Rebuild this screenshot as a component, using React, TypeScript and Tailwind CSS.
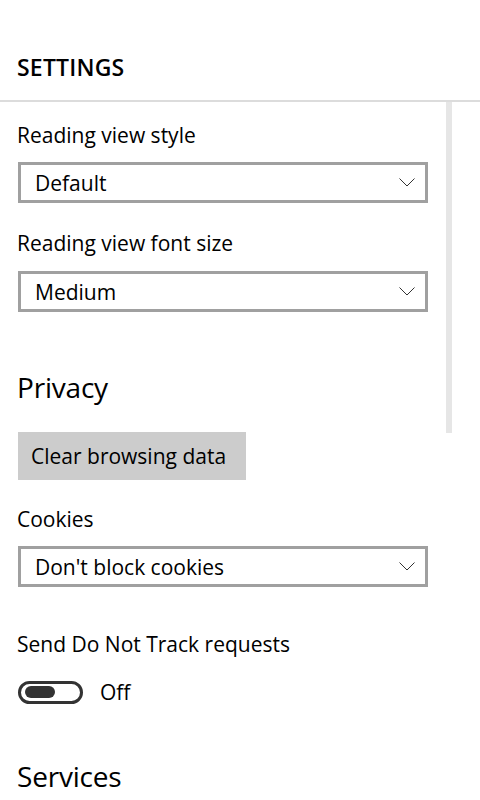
const font = { fontFamily: '"Open Sans", "Noto Sans", sans-serif' };

function Dropdown({ value }: { value: string }) {
  return (
    <div className="flex h-[41px] w-[410px] items-center justify-between border-[3px] border-[#a0a0a0] bg-white pl-[14px] pr-[10px]">
      <span className="text-[21px] leading-[30px] text-black">{value}</span>
      <svg viewBox="0 0 16 9" className="h-[9px] w-[16px]" fill="none" stroke="#333" strokeWidth="1">
        <path d="M0.5 0.5 8 8 15.5 0.5" />
      </svg>
    </div>
  );
}

function Label({ text }: { text: string }) {
  return <p className="text-[21px] leading-[30px] text-black">{text}</p>;
}

export default function App() {
  return (
    <div className="relative h-[800px] w-[480px] overflow-hidden bg-white text-black" style={font}>
      <header className="h-[102px] border-b-2 border-[#dcdcdc] pl-[17px] pt-[51px]">
        <h1 className="text-[23px] font-semibold leading-[32px] tracking-[0.2px]">SETTINGS</h1>
      </header>

      <div className="absolute left-[446px] top-[102px] h-[331px] w-[6px] bg-[#e6e6e6]" />

      <main className="flex flex-col pl-[17px]">
        <div className="mt-[18px]">
          <Label text="Reading view style" />
        </div>
        <div className="mt-[12px] pl-[1px]">
          <Dropdown value="Default" />
        </div>

        <div className="mt-[25px]">
          <Label text="Reading view font size" />
        </div>
        <div className="mt-[13px] pl-[1px]">
          <Dropdown value="Medium" />
        </div>

        <h2 className="mt-[55px] text-[28px] leading-[40px] tracking-[-0.2px]">Privacy</h2>

        <div className="mt-[25px] pl-[1px]">
          <button className="h-[48px] w-[228px] bg-[#cccccc] pl-[13px] text-left text-[21px] leading-[30px]">
            Clear browsing data
          </button>
        </div>

        <div className="mt-[24px]">
          <Label text="Cookies" />
        </div>
        <div className="mt-[12px] pl-[1px]">
          <Dropdown value="Don't block cookies" />
        </div>

        <div className="mt-[42px]">
          <Label text="Send Do Not Track requests" />
        </div>
        <div className="mt-[18px] flex items-center gap-[17px] pl-[1px]">
          <div className="flex h-[23px] w-[65px] items-center rounded-full border-[3px] border-[#333333] pl-[4px]">
            <div className="h-[12px] w-[30px] rounded-full bg-[#333333]" />
          </div>
          <span className="text-[21px] leading-[30px]">Off</span>
        </div>

        <h2 className="mt-[49px] text-[28px] leading-[40px] tracking-[-0.2px]">Services</h2>
      </main>
    </div>
  );
}
